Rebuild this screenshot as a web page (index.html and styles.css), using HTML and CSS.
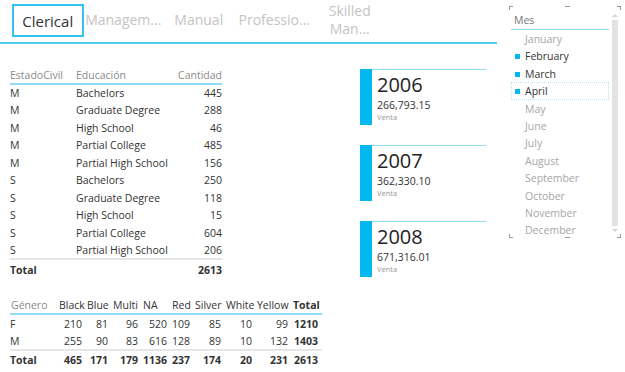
FILE: index.html
```html
<!DOCTYPE html>
<html>
<head>
    <title>Ventas</title>
    <link rel="stylesheet" href="styles.css">
</head>
<body>
    <div class="page">
        <div class="main">
            <div class="tabs">
                <div class="tab active"><span>Clerical</span></div>
                <div class="tab">Managem...</div>
                <div class="tab">Manual</div>
                <div class="tab">Professio...</div>
                <div class="tab">Skilled Man...</div>
            </div>

            <div class="content">
                <div class="tables">
                    <table class="grid grid-edu">
                        <colgroup>
                            <col style="width: 66px">
                            <col style="width: 94px">
                            <col style="width: 52px">
                        </colgroup>
                        <thead>
                            <tr><th>EstadoCivil</th><th>Educación</th><th class="num">Cantidad</th></tr>
                        </thead>
                        <tbody>
                            <tr><td>M</td><td>Bachelors</td><td class="num">445</td></tr>
                            <tr><td>M</td><td>Graduate Degree</td><td class="num">288</td></tr>
                            <tr><td>M</td><td>High School</td><td class="num">46</td></tr>
                            <tr><td>M</td><td>Partial College</td><td class="num">485</td></tr>
                            <tr><td>M</td><td>Partial High School</td><td class="num">156</td></tr>
                            <tr><td>S</td><td>Bachelors</td><td class="num">250</td></tr>
                            <tr><td>S</td><td>Graduate Degree</td><td class="num">118</td></tr>
                            <tr><td>S</td><td>High School</td><td class="num">15</td></tr>
                            <tr><td>S</td><td>Partial College</td><td class="num">604</td></tr>
                            <tr><td>S</td><td>Partial High School</td><td class="num">206</td></tr>
                        </tbody>
                        <tfoot>
                            <tr><td>Total</td><td></td><td class="num">2613</td></tr>
                        </tfoot>
                    </table>

                    <table class="grid grid-color">
                        <colgroup>
                            <col style="width: 48px">
                            <col style="width: 28px">
                            <col style="width: 26px">
                            <col style="width: 30px">
                            <col style="width: 29px">
                            <col style="width: 23px">
                            <col style="width: 31px">
                            <col style="width: 31px">
                            <col style="width: 36px">
                            <col style="width: 30px">
                        </colgroup>
                        <thead>
                            <tr><th>Género</th><th class="dark">Black</th><th class="dark">Blue</th><th class="dark">Multi</th><th class="dark">NA</th><th class="dark">Red</th><th class="dark">Silver</th><th class="dark">White</th><th class="dark">Yellow</th><th class="dark bold">Total</th></tr>
                        </thead>
                        <tbody>
                            <tr><td>F</td><td class="num">210</td><td class="num">81</td><td class="num">96</td><td class="num">520</td><td class="num">109</td><td class="num">85</td><td class="num">10</td><td class="num">99</td><td class="num bold">1210</td></tr>
                            <tr><td>M</td><td class="num">255</td><td class="num">90</td><td class="num">83</td><td class="num">616</td><td class="num">128</td><td class="num">89</td><td class="num">10</td><td class="num">132</td><td class="num bold">1403</td></tr>
                        </tbody>
                        <tfoot>
                            <tr><td>Total</td><td class="num">465</td><td class="num">171</td><td class="num">179</td><td class="num">1136</td><td class="num">237</td><td class="num">174</td><td class="num">20</td><td class="num">231</td><td class="num">2613</td></tr>
                        </tfoot>
                    </table>
                </div>

                <div class="cards">
                    <div class="card">
                        <div class="card-bar"></div>
                        <div class="card-body">
                            <div class="card-year">2006</div>
                            <div class="card-value">266,793.15</div>
                            <div class="card-label">Venta</div>
                        </div>
                    </div>
                    <div class="card">
                        <div class="card-bar"></div>
                        <div class="card-body">
                            <div class="card-year">2007</div>
                            <div class="card-value">362,330.10</div>
                            <div class="card-label">Venta</div>
                        </div>
                    </div>
                    <div class="card">
                        <div class="card-bar"></div>
                        <div class="card-body">
                            <div class="card-year">2008</div>
                            <div class="card-value">671,316.01</div>
                            <div class="card-label">Venta</div>
                        </div>
                    </div>
                </div>
            </div>
        </div>

        <div class="slicer">
            <span class="mark mark-tl"></span>
            <span class="mark mark-tm"></span>
            <span class="mark mark-tr"></span>
            <span class="mark mark-bl"></span>
            <span class="mark mark-bm"></span>
            <span class="mark mark-br"></span>

            <div class="slicer-list">
                <div class="slicer-title">Mes</div>
                <div class="slicer-item">January</div>
                <div class="slicer-item selected">February</div>
                <div class="slicer-item selected">March</div>
                <div class="slicer-item selected focused">April</div>
                <div class="slicer-item">May</div>
                <div class="slicer-item">June</div>
                <div class="slicer-item">July</div>
                <div class="slicer-item">August</div>
                <div class="slicer-item">September</div>
                <div class="slicer-item">October</div>
                <div class="slicer-item">November</div>
                <div class="slicer-item">December</div>
            </div>
            <div class="scrollbar">
                <div class="arrow arrow-up"></div>
                <div class="thumb"></div>
                <div class="arrow arrow-down"></div>
            </div>
        </div>
    </div>
</body>
</html>
```

FILE: styles.css
```css
:root {
    --accent: #01b8f0;
    --accent-light: #8fdcf6;
    --text: #333333;
    --muted: #a6a6a6;
}

* {
    box-sizing: border-box;
    font-family: 'Open Sans', 'Noto Sans', sans-serif;
}

body {
    margin: 0;
    padding: 0;
    background-color: white;
    color: var(--text);
}

.page {
    display: flex;
    width: 625px;
    height: 372px;
    overflow: hidden;
}

.main {
    width: 498px;
}

/* tab strip */
.tabs {
    display: flex;
    height: 44px;
    padding-left: 10px;
    border-bottom: 2px solid #4ccbf3;
    width: 497px;
}

.tab {
    width: 75.5px;
    display: flex;
    align-items: center;
    justify-content: center;
    text-align: center;
    color: #c4c4c4;
    font-size: 14px;
    line-height: 18px;
    padding: 0 14px;
    margin-top: -2px;
}

.tab.active {
    padding: 0;
    margin-top: 0;
    align-items: flex-start;
}

.tab.active span {
    display: flex;
    align-items: center;
    justify-content: center;
    width: 72px;
    height: 33px;
    margin-top: 4px;
    border: 2px solid #33c3f1;
    color: #333;
    font-size: 15px;
}

.content {
    display: flex;
}

/* tables */
.tables {
    width: 360px;
    padding-left: 10px;
}

.grid {
    border-collapse: collapse;
    table-layout: fixed;
    font-size: 10.5px;
}

.grid th {
    font-weight: normal;
    color: #8a8a8a;
    text-align: left;
    padding: 0;
    border-bottom: 2px solid var(--accent-light);
}

.grid td {
    padding: 0;
    white-space: nowrap;
}

.grid .num {
    text-align: right;
}

.grid .dark {
    color: var(--text);
}

.grid .bold,
.grid tfoot td {
    font-weight: bold;
}

.grid tfoot td {
    border-top: 2px solid #e6e6e6;
}

.grid-edu {
    width: 212px;
    margin-top: 24px;
}

.grid-edu th {
    height: 16px;
    vertical-align: top;
}

.grid-edu tbody td {
    height: 17.5px;
}

.grid-edu tfoot td {
    height: 19px;
    padding-top: 1px;
}

.grid-color {
    width: 312px;
    margin-top: 20px;
}

.grid-color th {
    height: 16px;
    vertical-align: top;
    padding-left: 1px;
}

.grid-color tbody td {
    height: 18px;
}

.grid-color td.num {
    padding-right: 4px;
}

.grid-color tfoot td {
    height: 18px;
}

/* cards */
.cards {
    display: flex;
    flex-direction: column;
    gap: 20px;
    padding-top: 25px;
}

.card {
    display: flex;
    width: 126px;
    height: 56px;
}

.card-bar {
    width: 12px;
    background-color: var(--accent);
}

.card-body {
    flex: 1;
    border-top: 1px solid var(--accent-light);
    padding-left: 5px;
}

.card-year {
    font-size: 20px;
    line-height: 24px;
    margin-top: 3px;
    color: #222;
}

.card-value {
    font-size: 10.5px;
    line-height: 14px;
    margin-top: 1px;
}

.card-label {
    font-size: 7.5px;
    line-height: 11px;
    color: #999;
}

/* slicer */
.slicer {
    position: relative;
    display: flex;
    margin-left: 11px;
    margin-top: 6px;
    width: 112px;
    height: 232px;
}

.mark {
    position: absolute;
    width: 4px;
    height: 4px;
    border-color: #9a9a9a;
    border-style: solid;
    border-width: 0;
}

.mark-tl { top: 0; left: 0; border-top-width: 1px; border-left-width: 1px; }
.mark-tr { top: 0; right: 0; border-top-width: 1px; border-right-width: 1px; }
.mark-bl { bottom: 0; left: 0; border-bottom-width: 1px; border-left-width: 1px; }
.mark-br { bottom: 0; right: 0; border-bottom-width: 1px; border-right-width: 1px; }
.mark-tm { top: 0; left: 56px; width: 5px; border-top-width: 1px; }
.mark-bm { bottom: 0; left: 56px; width: 5px; border-bottom-width: 1px; }

.slicer-list {
    width: 100px;
    padding-left: 2px;
    padding-top: 6px;
}

.slicer-title {
    font-size: 10.5px;
    color: #777;
    height: 18px;
    line-height: 16px;
    padding-left: 3px;
    border-bottom: 1px solid var(--accent-light);
}

.slicer-item {
    position: relative;
    height: 17.4px;
    line-height: 17px;
    font-size: 10.5px;
    padding-left: 13px;
    color: var(--muted);
    border: 1px solid transparent;
}

.slicer-item.selected {
    color: var(--text);
}

.slicer-item.selected::before {
    content: "";
    position: absolute;
    left: 3px;
    top: 6px;
    width: 5px;
    height: 5px;
    background-color: var(--accent);
}

.slicer-item.focused {
    border: 1px dotted #b8e4f4;
}

.scrollbar {
    display: flex;
    flex-direction: column;
    align-items: center;
    width: 8px;
    margin-left: 2px;
    padding-top: 8px;
}

.thumb {
    width: 6px;
    height: 206px;
    margin: 3px 0;
    background-color: #e3e3e3;
}

.arrow {
    width: 0;
    height: 0;
    border-left: 3px solid transparent;
    border-right: 3px solid transparent;
}

.arrow-up {
    border-bottom: 3px solid #d6d6d6;
}

.arrow-down {
    border-top: 3px solid #d6d6d6;
}
```
